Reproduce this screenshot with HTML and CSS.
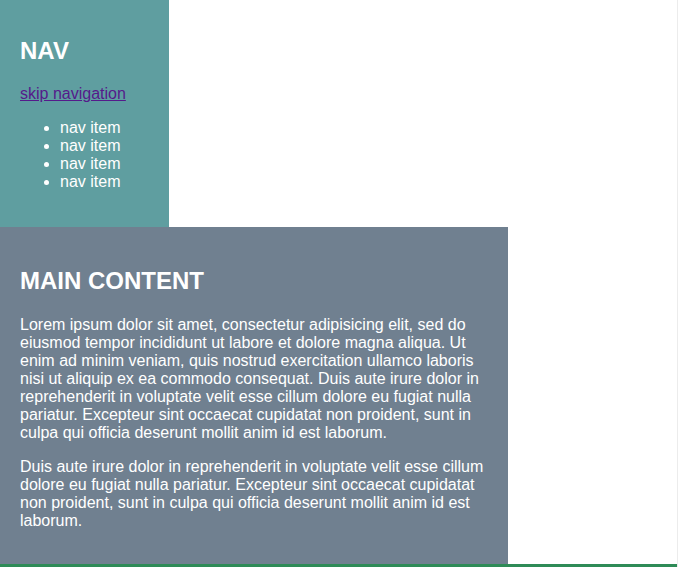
FILE: index.html
```html
<!DOCTYPE html>
<html lang="en">
<head>
<meta charset="utf-8">
<title>Layout</title>
<link rel="stylesheet" href="styles.css">
</head>
<body>
<div class="page">
  <nav class="nav">
    <h2 class="title">NAV</h2>
    <p class="skip"><a href="#main" class="skip-link">skip navigation</a></p>
    <ul class="nav-list">
      <li>nav item</li>
      <li>nav item</li>
      <li>nav item</li>
      <li>nav item</li>
    </ul>
  </nav>
  <main class="main" id="main">
    <h2 class="title title-main">MAIN CONTENT</h2>
    <p class="text">Lorem ipsum dolor sit amet, consectetur adipisicing elit, sed do eiusmod tempor incididunt ut labore et dolore magna aliqua. Ut enim ad minim veniam, quis nostrud exercitation ullamco laboris nisi ut aliquip ex ea commodo consequat. Duis aute irure dolor in reprehenderit in voluptate velit esse cillum dolore eu fugiat nulla pariatur. Excepteur sint occaecat cupidatat non proident, sunt in culpa qui officia deserunt mollit anim id est laborum.</p>
    <p class="text">Duis aute irure dolor in reprehenderit in voluptate velit esse cillum dolore eu fugiat nulla pariatur. Excepteur sint occaecat cupidatat non proident, sunt in culpa qui officia deserunt mollit anim id est laborum.</p>
  </main>
  <footer class="footer"></footer>
</div>
</body>
</html>
```
FILE: styles.css
```css
html, body {
  margin: 0;
  padding: 0;
}
body {
  font-family: "Liberation Sans", Arial, sans-serif;
  font-size: 16px;
  color: #fff;
  background: #fff;
  overflow: hidden;
}
.page {
  display: flex;
  flex-direction: column;
  border-right: 1px solid #ececec;
}
.title {
  font-size: 24px;
  font-weight: bold;
  margin: 0 0 20px;
}
.title-main {
  margin-bottom: 21px;
}
.nav {
  width: 25%;
  box-sizing: border-box;
  background: #5f9ea0;
  padding: 37px 20px 36px;
}
.skip {
  margin: 0 0 16px;
}
.skip-link {
  color: #551a8b;
}
.nav-list {
  margin: 0;
  padding-left: 40px;
}
.main {
  width: 75%;
  box-sizing: border-box;
  background: #708090;
  padding: 40px 20px 34px;
}
.text {
  margin: 0 0 16px;
}
.text:last-child {
  margin-bottom: 0;
}
.footer {
  background: #2e8b57;
  height: 40px;
}
```
